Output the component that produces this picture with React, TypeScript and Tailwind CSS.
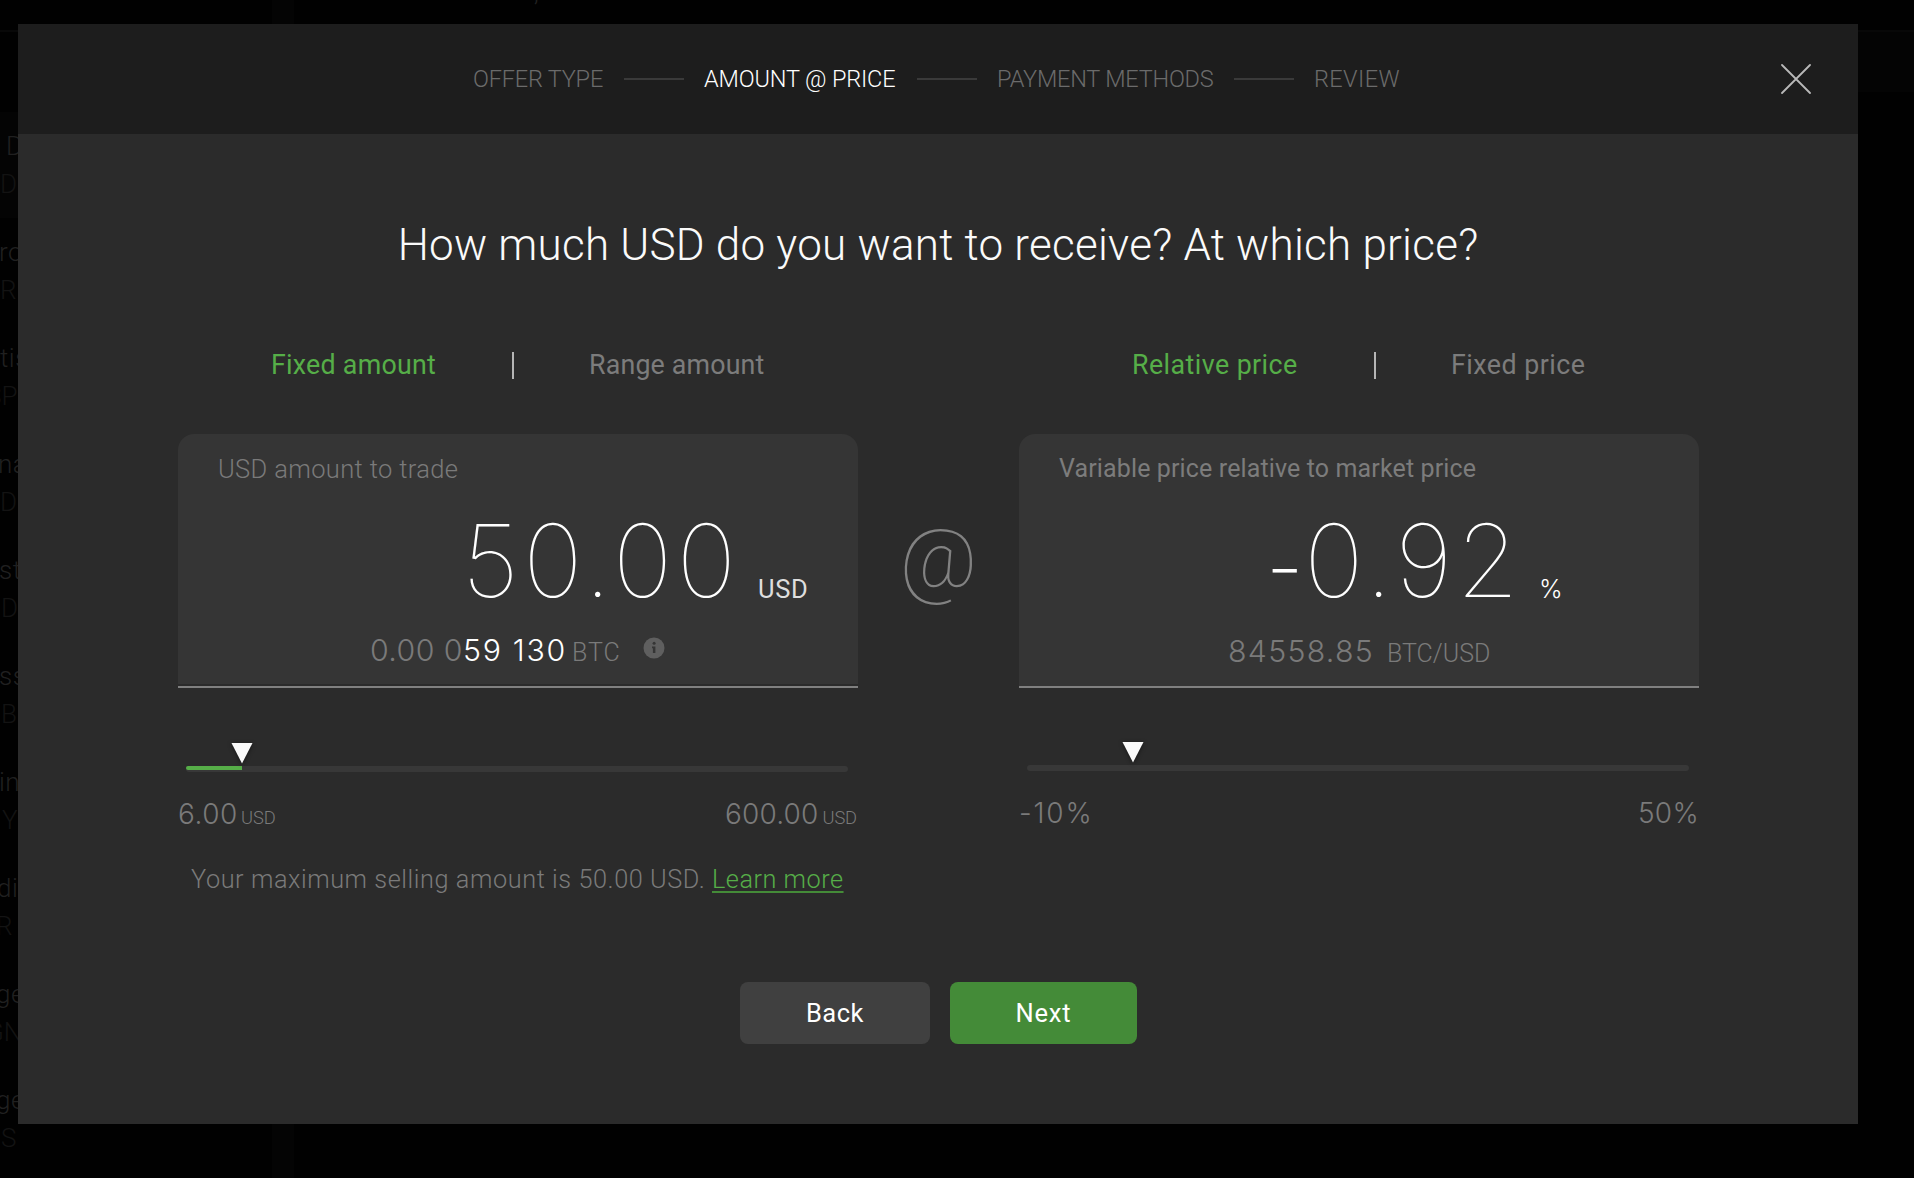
import type { ReactNode } from "react";

const rows = [
  { name: "D", code: "D", namePad: "pl-[6px]", codePad: "pl-0" },
  { name: "ro", code: "R", namePad: "-ml-px", codePad: "pl-0" },
  { name: "tis", code: "SP", namePad: "pl-0", codePad: "-ml-[14px]" },
  { name: "na", code: "D", namePad: "-ml-[2px]", codePad: "pl-0" },
  { name: "st", code: "D", namePad: "-ml-px", codePad: "pl-px" },
  { name: "ss", code: "B", namePad: "-ml-px", codePad: "pl-px" },
  { name: "in", code: "Y", namePad: "-ml-px", codePad: "pl-[2px]" },
  { name: "dia", code: "R", namePad: "-ml-[3px]", codePad: "-ml-[4px]" },
  { name: "ge", code: "GN", namePad: "-ml-[4px]", codePad: "-ml-[14px]" },
  { name: "ge", code: "S", namePad: "-ml-[4px]", codePad: "pl-px" },
];

function Backdrop() {
  return (
    <div className="absolute inset-0 overflow-hidden bg-[#010101]">
      <div className="absolute top-0 left-[272px] h-full w-[22px] bg-[#040404]" />
      <div className="absolute top-[30px] left-0 h-[2px] w-full bg-[#080808]" />
      <div className="absolute top-[32px] right-0 h-[60px] w-[56px] bg-[#040404]" />
      <div className="absolute top-[-17px] left-[534px] font-light text-[24px] leading-[20px] text-[#222222]">
        ,
      </div>
      <div className="relative mt-[112px] flex w-[272px] flex-col">
        {rows.map((row, i) => (
          <div key={i} className={i === 0 ? "h-[106px] bg-[#040404] pt-[15px]" : "h-[106px] pt-[15px]"}>
            <div className={`${row.namePad} text-[26px] leading-[38px] font-light tracking-[0.5px] text-[#202020]`}>
              {row.name}
            </div>
            <div className={`${row.codePad} text-[26px] leading-[38px] font-light text-[#131313]`}>{row.code}</div>
          </div>
        ))}
      </div>
    </div>
  );
}

function StepLine() {
  return <div className="mx-[20px] h-[2px] w-[60px] shrink-0 bg-[#3a3a3a]" />;
}

function Header() {
  return (
    <div className="flex h-[110px] items-center bg-[#1d1d1d] pl-[455px] text-[23.5px] leading-[30px] font-light whitespace-nowrap text-[#6b6b6b]">
      <span className="w-[131px] tracking-[-0.2px]">OFFER TYPE</span>
      <StepLine />
      <span className="w-[193px] tracking-[-0.15px] text-white">AMOUNT @ PRICE</span>
      <StepLine />
      <span className="w-[217px] tracking-[-0.22px]">PAYMENT METHODS</span>
      <StepLine />
      <span className="w-[88px] tracking-[0.4px]">REVIEW</span>
      <button className="mr-[47px] ml-auto" aria-label="Close">
        <svg width="30" height="30" viewBox="0 0 30 30" stroke="#b9b9b9" strokeWidth="1.8" strokeLinecap="round">
          <path d="M1 1L29 29M29 1L1 29" />
        </svg>
      </button>
    </div>
  );
}

function Tabs({ className, children }: { className: string; children: ReactNode }) {
  return (
    <div className={`flex h-[40px] items-center text-[26.8px] leading-[40px] whitespace-nowrap text-[#7c7c7c] ${className}`}>
      {children}
    </div>
  );
}

function TabDivider() {
  return <div className="mx-[75px] h-[27px] w-[2px] shrink-0 bg-[#b5b5b5]" />;
}

function Slider({ pad, fill }: { pad: string; fill: string }) {
  return (
    <div>
      <svg className={`block drop-shadow-[0_1px_2px_rgba(0,0,0,0.5)] ${pad}`} width="22" height="21" viewBox="0 0 22 21" fill="#fafafa">
        <path d="M0.5 0H21.5L11 20.5Z" />
      </svg>
      <div className="mt-[2px] ml-[8px] h-[6px] w-[662px] rounded-[3px] bg-[#383838]">
        <div className={`h-[4px] rounded-l-[2px] bg-[#56ae48] ${fill}`} />
      </div>
    </div>
  );
}

const digits = "font-['Inter',sans-serif]";

export default function App() {
  return (
    <div className="relative h-[1178px] w-[1914px] overflow-hidden font-['Roboto',sans-serif]">
      <Backdrop />
      <div className="relative mt-[24px] ml-[18px] h-[1100px] w-[1840px] bg-[#2b2b2b]">
        <Header />
        <h1 className="mt-[81px] text-center text-[44px] leading-[60px] font-light tracking-[0.24px] text-[#fafafa]">
          How much USD do you want to receive? At which price?
        </h1>

        <div className="mt-[70px] flex h-[552px] pl-[160px]">
          <section className="w-[680px]">
            <Tabs className="pl-[93px]">
              <span className="w-[166px] tracking-[0.25px] text-[#56ae48]">Fixed amount</span>
              <TabDivider />
              <span className="tracking-[0.17px]">Range amount</span>
            </Tabs>
            <div className="mt-[49px] border-b-2 border-[#808080] pb-[2px]">
              <div className="h-[250px] rounded-t-[16px] bg-[#353535] pt-[17px]">
                <div className="pl-[40px] text-[25.5px] leading-[36px] font-light tracking-[0.35px] text-[#7a7a7a]">
                  USD amount to trade
                </div>
                <div className="mt-[23px] flex h-[100px] items-baseline pl-[284px] leading-[100px] text-white">
                  <span className={`w-[296px] text-[101px] font-thin tracking-[4px] ${digits}`}>50.00</span>
                  <span className="translate-y-px text-[25.5px] leading-[30px] tracking-[0.6px] text-[#dedede]">
                    USD
                  </span>
                </div>
                <div className="mt-[20px] flex items-baseline pl-[192px] text-[30.3px] leading-[40px] font-light whitespace-nowrap text-[#7a7a7a]">
                  <span className={`w-[93px] tracking-[0.4px] ${digits}`}>0.00 0</span>
                  <span className={`w-[109px] tracking-[1.7px] text-white ${digits}`}>59 130</span>
                  <span className="w-[71px] text-[25px] tracking-[0.9px]">BTC</span>
                  <svg className="mt-[7px] self-start" width="22" height="22" viewBox="0 0 22 22">
                    <circle cx="11" cy="11" r="10.5" fill="#5f5f5f" />
                    <path d="M9 9.4H12.4V16H9.9V11.2H9Z" fill="#353535" />
                    <circle cx="11.1" cy="6.3" r="1.5" fill="#353535" />
                  </svg>
                </div>
              </div>
            </div>
            <div className="mt-[55px]">
              <Slider pad="ml-[53px]" fill="w-[56px]" />
            </div>
            <div className={`mt-[26px] flex h-[32px] justify-between text-[28px] leading-[32px] font-light text-[#7a7a7a] ${digits}`}>
              <div className="tracking-[0.57px]">
                6.00<span className="ml-[3px] font-['Roboto',sans-serif] text-[18.3px] tracking-[-0.1px]">USD</span>
              </div>
              <div className="mr-px tracking-[0.15px]">
                600.00<span className="ml-[4px] font-['Roboto',sans-serif] text-[18.3px] tracking-[-0.1px]">USD</span>
              </div>
            </div>
            <p className="mt-[32px] flex pl-[13px] text-[25.3px] leading-[36px] font-light whitespace-nowrap text-[#7a7a7a]">
              <span className="w-[521px] tracking-[0.56px]">Your maximum selling amount is 50.00 USD.</span>
              <a className="tracking-[0.5px] text-[#56ae48] underline decoration-[#448b38] decoration-2 underline-offset-[3px]">
                Learn more
              </a>
            </p>
          </section>

          <div className="w-[161px] pt-[164px] text-center text-[84px] leading-[100px] font-thin text-[#828282]">@</div>

          <section className="w-[680px]">
            <Tabs className="pl-[113px]">
              <span className="w-[167px] tracking-[0.43px] text-[#56ae48]">Relative price</span>
              <TabDivider />
              <span className="tracking-[0.48px]">Fixed price</span>
            </Tabs>
            <div className="mt-[49px] h-[254px] rounded-t-[16px] border-b-2 border-[#808080] bg-[#353535] pt-[17px]">
              <div className="pl-[40px] text-[25px] leading-[36px] tracking-[0.13px] text-[#7c7c7c]">
                Variable price relative to market price
              </div>
              <div className="mt-[23px] flex h-[100px] items-baseline pl-[247px] leading-[100px] text-white">
                <span className={`flex w-[273px] items-baseline text-[101px] font-thin tracking-[3.8px] ${digits}`}>
                  <span className="w-[38px] text-[84px] font-extralight tracking-normal">-</span>
                  0.92
                </span>
                <span className={`translate-y-px text-[25.3px] leading-[30px] font-light ${digits}`}>%</span>
              </div>
              <div className="mt-[21px] flex items-baseline pl-[209px] text-[30.3px] leading-[40px] font-light text-[#7a7a7a]">
                <span className={`w-[159px] tracking-[1.3px] ${digits}`}>84558.85</span>
                <span className="text-[25px]">BTC/USD</span>
              </div>
            </div>
            <div className="mt-[54px]">
              <Slider pad="ml-[103px]" fill="w-0" />
            </div>
            <div className={`mt-[26px] flex justify-between text-[28px] leading-[32px] font-light text-[#7a7a7a] ${digits}`}>
              <span className="tracking-[1.8px]">-10%</span>
              <span className="tracking-[0.3px]">50%</span>
            </div>
          </section>
        </div>

        <div className="mt-[85px] flex gap-[20px] pl-[722px] text-[25.5px] text-white">
          <button className="h-[62px] w-[190px] rounded-lg bg-[#404040] pt-px tracking-[0.5px]">Back</button>
          <button className="h-[62px] w-[187px] rounded-lg bg-[#448b38] pt-px tracking-[0.8px]">Next</button>
        </div>
      </div>
    </div>
  );
}
